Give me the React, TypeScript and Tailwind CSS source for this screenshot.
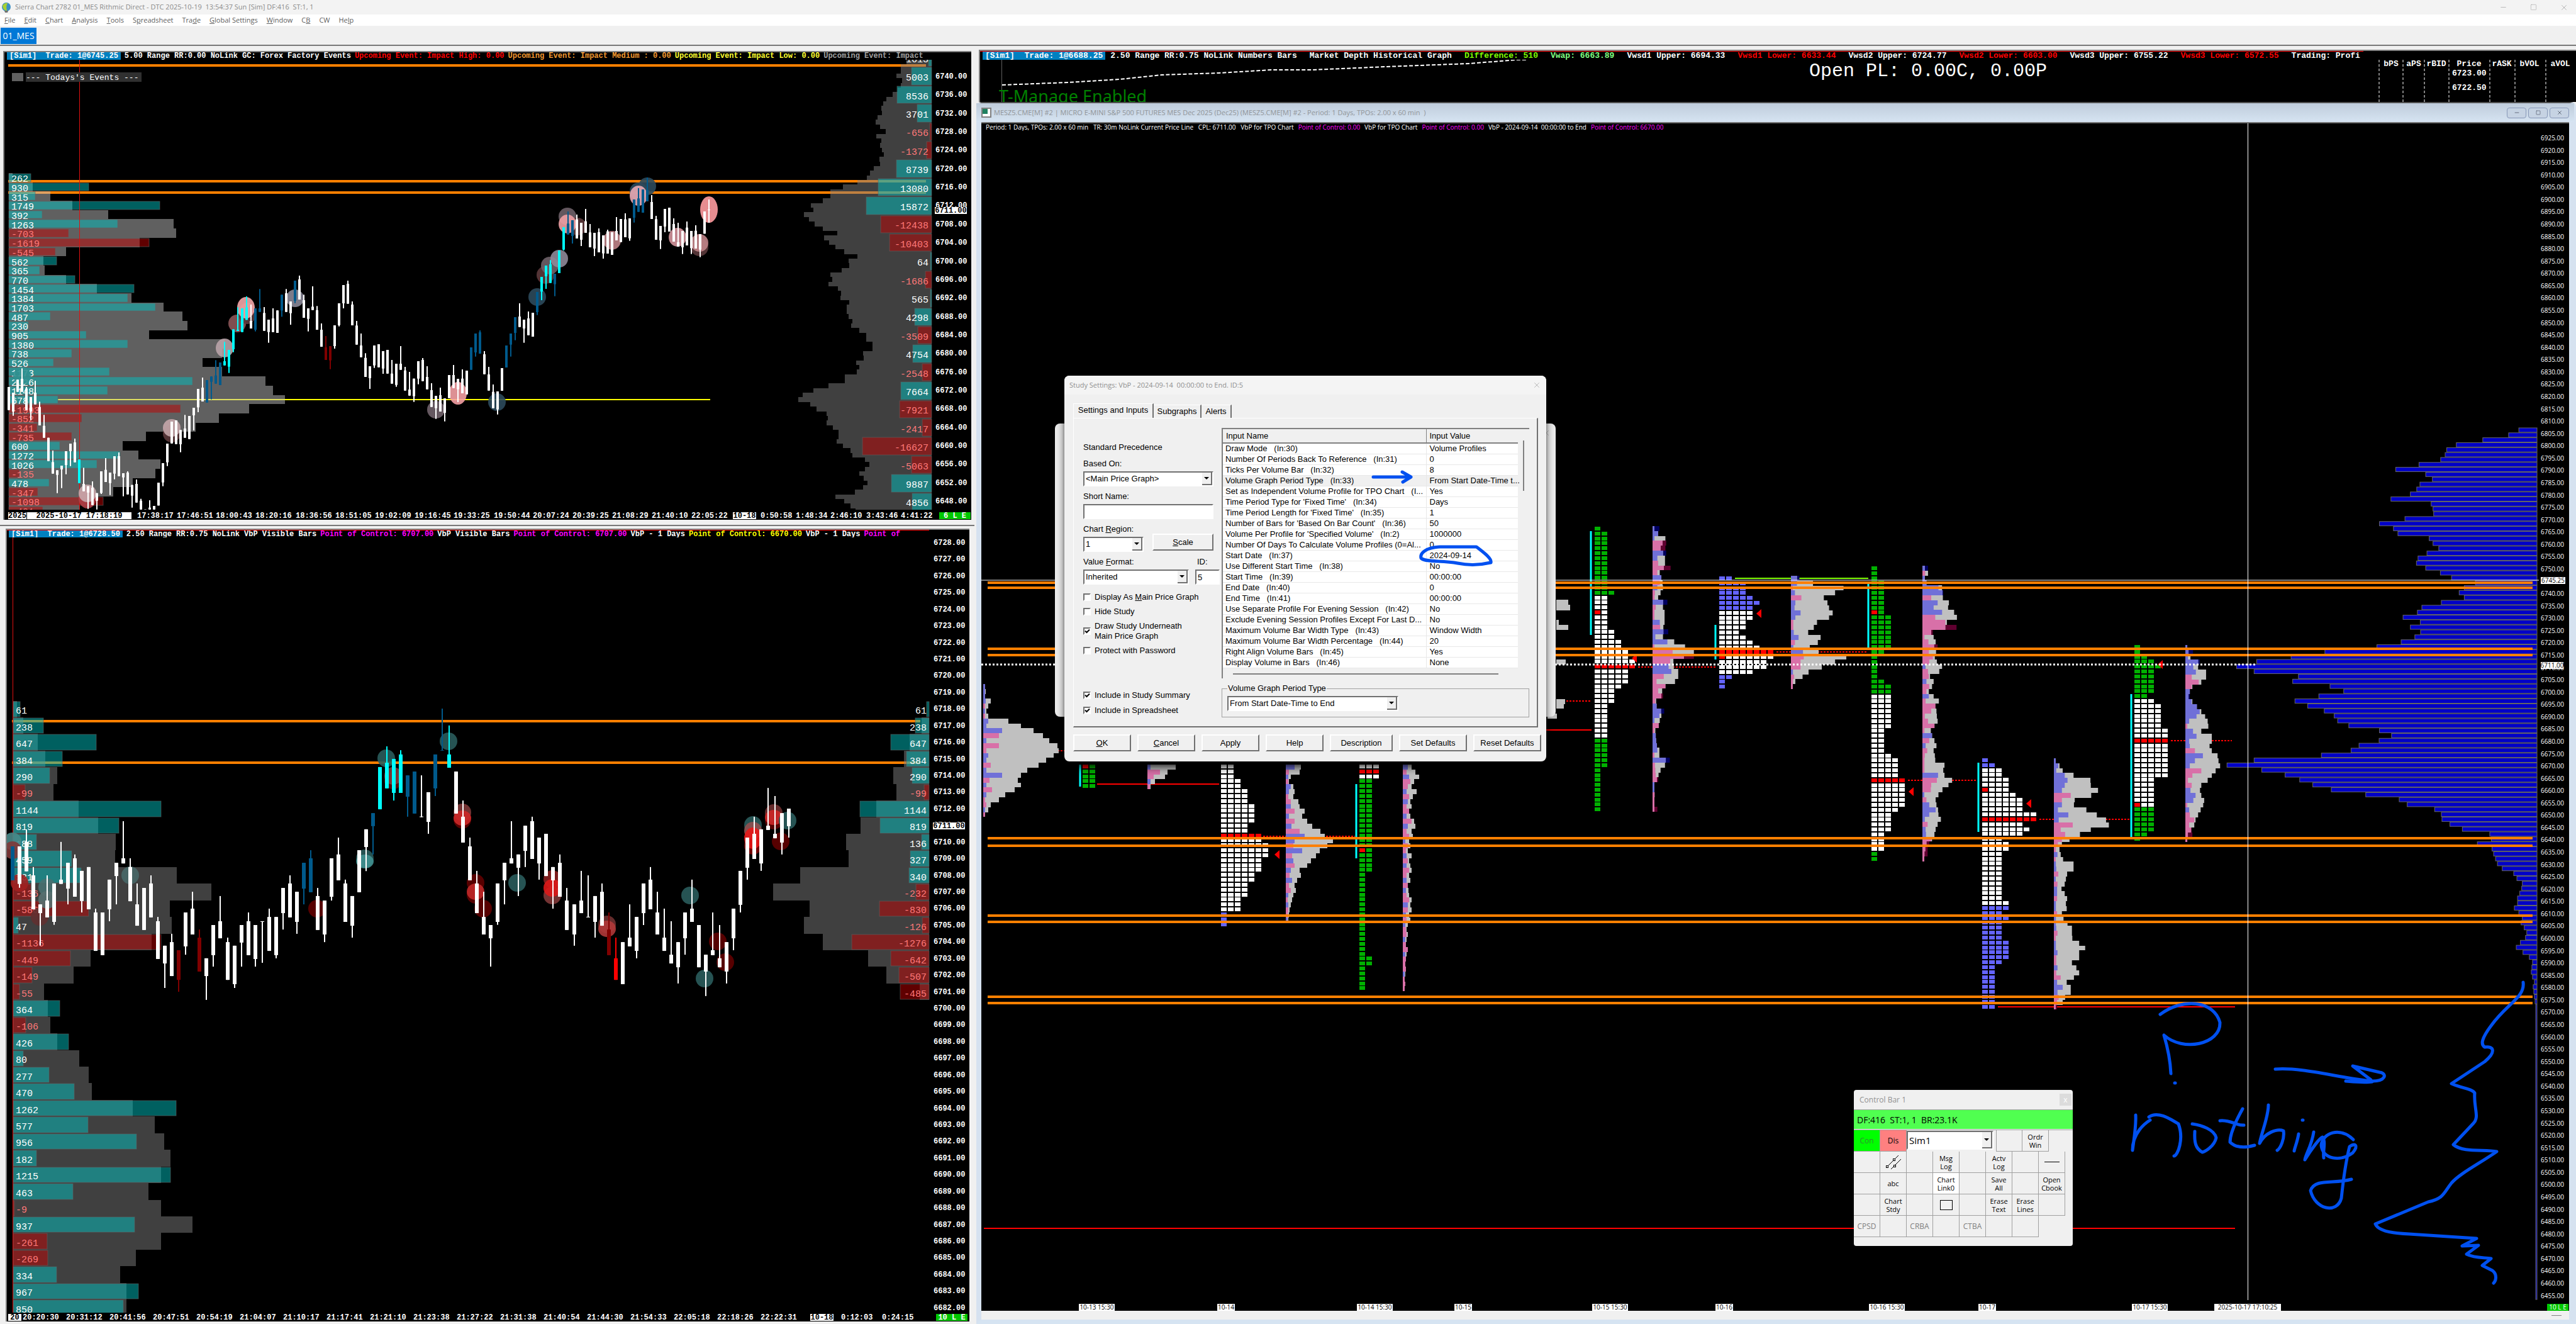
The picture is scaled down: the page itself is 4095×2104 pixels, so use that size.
import { ReactNode } from "react";
import { Minus, Square, X } from "lucide-react";

type Row = [number, number, number];
type Blob = [number, number, string, number?];

const ORANGE = "#ff8000";
const candleColors: Record<string, string> = {
  w: "#ffffff",
  b: "#005a8c",
  c: "#00ffff",
  d: "#800000",
  r: "#ff0000",
};

// candles: wick top, body top, body bottom, wick bottom (one entry per bar)
const rangeCandles =
  "645 645 755 755|672 672 762 782|610 610 668 668|556 606 668 668|645 652 755 755|693 693 762 803|615 672 728 728|715 740 828 828|778 830 887 887|887 887 998 998|948 1003 1058 1058|1042 1042 1064 1151|1020 1020 1038 1127|951 951 1017 1061|915 915 951 1022|891 909 1004 1004|990 990 1103 1103|1030 1107 1142 1142|1118 1118 1148 1226|1095 1125 1208 1208|1151 1151 1187 1229|1047 1047 1150 1155|984 1040 1098 1098|1053 1053 1103 1160|975 975 1058 1085|957 975 1070 1070|1056 1056 1076 1166|1047 1053 1157 1157|1112 1112 1163 1220|1086 1107 1196 1196|1178 1187 1229 1229|1228 1228 1229 1229|1185 1220 1229 1229|1212 1212 1229 1229|1101 1101 1210 1210|1008 1008 1100 1118|915 915 1004 1022|810 810 914 914|804 804 917 917|850 850 918 956|778 843 887 887|783 783 893 893|744 744 780 852|654 654 742 765|600 648 714 714|612 612 719 719|595 595 620 704|517 590 629 629|528 528 636 636|430 522 542 542|468 468 548 578|370 370 465 479|265 372 378 378|270 270 383 383|213 265 325 325|252 330 366 366|270 270 372 380|178 270 287 287|264 292 377 377|324 324 383 434|270 318 383 383|280 280 387 387|205 205 280 310|178 198 287 287|237 237 293 348|138 138 234 245|114 132 228 228|205 231 315 315|270 270 320 380|165 262 278 278|259 279 372 372|342 372 453 453|402 456 516 516|450 450 518 560|351 351 450 462|246 246 350 356|159 159 246 270|138 153 248 248|237 252 351 351|330 352 443 443|390 447 503 503|484 506 597 597|546 546 603 654|447 447 542 554|441 441 551 551|474 474 557 582|468 468 581 581|516 581 629 629|534 534 635 644|450 534 563 563|549 566 662 662|573 657 686 686|605 605 689 716|522 522 605 632|507 516 617 617|546 597 656 656|627 660 740 740|687 687 746 797|648 684 762 762|699 699 768 809|588 588 698 698|540 588 650 650|606 606 656 717|561 605 675 675|567 567 680 680|456 456 563 563|390 390 480 500|375 384 486 486|474 489 584 584|549 585 662 662|633 668 746 746|666 666 752 776|555 555 663 663|447 447 552 552|390 390 443 500|312 312 387 422|246 309 359 359|324 324 366 434|285 318 398 398|291 291 405 405|192 192 288 302|120 120 190 231|66 66 117 177|40 60 149 149|105 105 155 212|-6 -6 102 102|-117 -117 -10 -6|-192 -134 -82 -82|-150 -150 -75 -39|-177 -154 -63 -63|-138 -138 -57 -27|-204 -145 -90 -90|-132 -92 -21 -21|-90 -90 -15 21|-111 -93 3 3|-78 -78 8 33|-105 -97 9 9|-93 -93 15 15|-165 -99 -54 -54|-156 -156 -46 -46|-183 -154 -69 -69|-159 -159 -64 -52|-249 -249 -162 -139|-303 -254 -190 -190|-297 -297 -186 -186|-354 -295 -240 -240|-270 -237 -156 -156|-171 -155 -57 -57|-123 -123 -54 -13|-204 -204 -120 -93|-210 -210 -96 -96|-159 -132 -48 -48|-138 -45 -24 -24|-99 -99 -21 11|-144 -115 -30 -30|-99 -99 -17 11|-126 -100 -15 -15|-84 -84 -10 26|-192 -192 -86 -86|-249 -201 -198 -138";
const rangeTints: Record<string, number[]> = {
  c: [16, 49, 50, 51, 52, 53, 54, 121, 122, 123, 125, 126],
  b: [45, 46, 47, 48, 56, 57, 62, 65, 105, 106, 107, 113, 114, 115, 120, 124, 127, 128, 142, 143, 144, 145],
  d: [72, 73],
};

const fastCandles =
  "742 742 893 893|742 742 909 926|667 722 853 853|834 871 1022 1022|1000 1000 1039 1183|871 983 1058 1058|907 907 1078 1091|722 890 909 909|815 815 930 1000|778 795 966 966|851 851 985 1036|834 834 1022 1022|1019 1036 1207 1207|1036 1036 1226 1226|890 890 1022 1075|815 815 874 1000|630 795 818 818|795 834 986 986|907 1000 1095 1095|927 927 1114 1114|871 907 1058 1058|1056 1075 1243 1243|1184 1184 1263 1372|1131 1168 1319 1319|1204 1204 1336 1389|1036 1036 1187 1224|944 1019 1134 1134|1112 1148 1299 1299|1240 1240 1319 1425|1092 1092 1226 1277|963 1075 1151 1151|1148 1168 1336 1336|1184 1184 1355 1372|1092 1092 1170 1277|1036 1075 1226 1226|1092 1092 1243 1277|1075 1075 1078 1260|1019 1056 1207 1207|1056 1056 1226 1240|927 927 1039 1112|871 907 1058 1058|944 944 1078 1131|815 815 930 1000|759 795 946 946|927 963 1114 1114|983 983 1134 1168|795 795 966 983|703 778 893 893|890 907 1078 1078|963 963 1095 1148|759 759 946 946|666 666 745 852|594 594 652 778|389 389 577 577|297 370 484 484|353 353 504 538|314 333 504 504|426 426 521 610|409 409 596 596|426 609 612 612|501 501 633 686|333 333 484 518|129 314 316 316|204 333 392 392|409 409 596 596|538 610 725 725|703 742 893 893|851 907 1039 1039|944 1056 1134 1134|1092 1092 1151 1277|907 907 1078 1091|815 815 893 1000|630 795 818 818|778 778 837 963|650 650 762 834|610 630 798 798|703 703 818 890|686 686 874 874|834 834 893 1019|778 815 966 966|927 983 1114 1114|1000 1000 1134 1184|851 983 1039 1039|871 1055 1058 1058|963 963 1078 1148|907 944 1095 1095|1036 1112 1226 1226|1148 1240 1336 1336|1168 1168 1355 1355|1000 1148 1187 1187|1056 1056 1207 1240|907 907 1039 1092|834 890 1022 1022|944 1036 1134 1134|1019 1148 1207 1207|1075 1224 1263 1263|1168 1168 1280 1352|1036 1036 1151 1224|890 1019 1078 1078|1092 1092 1280 1280|1224 1224 1299 1408|1036 1204 1226 1226|1092 1240 1280 1280|1168 1168 1299 1352|1019 1019 1151 1204|851 851 1002 1036|703 703 837 890|610 686 798 798|666 666 818 851|482 650 669 669|518 686 706 706|594 594 725 778|574 574 652 703";
const fastTints: Record<string, number[]> = {
  c: [53, 54, 55, 56, 63],
  b: [0, 42, 43, 52, 57, 58, 61, 62],
  d: [24, 27, 86],
  r: [87],
};

// delta, bar width, total volume width
const rangeLeftProfile: Row[] = [
  [262, 35, 6], [930, 127, 38], [315, 42, 66], [1749, 240, 101], [392, 53, 158], [1263, 173, 262],
  [-703, 95, 266], [-1619, 223, 208], [-545, 74, 91], [562, 76, 55], [365, 49, 57], [770, 105, 91],
  [1454, 199, 140], [1384, 189, 195], [1703, 233, 246], [487, 66, 276], [230, 31, 284], [905, 123, 223],
  [1380, 189, 343], [738, 100, 339], [526, 71, 308], [1173, 160, 339], [2226, 292, 408], [1148, 157, 420],
  [678, 78, 439], [-1993, 273, 382], [-852, 116, 334], [-341, 45, 297], [-735, 100, 218], [600, 81, 181],
  [1272, 177, 206], [1026, 140, 241], [-135, 17, 233], [478, 64, 197], [-347, 46, 166], [-1098, 150, 113],
  [-401, 54, 112],
];
const rangeRightDeltas: [number, number][] = [
  [1613, 5], [5003, 32], [8536, 55], [3701, 23], [-656, 3], [-1372, 8], [8739, 56], [13080, 85], [15872, 104],
  [-12438, 81], [-10403, 67], [64, 2], [-1686, 10], [565, 2], [4298, 27], [-3509, 22], [4754, 30], [-2548, 15],
  [7664, 49], [-7921, 51], [-2417, 15], [-16627, 110], [-5063, 32], [9887, 64], [4856, 31],
];
const rangeRightVolume = [
  40, 49, 49, 56, 47, 49, 54, 62, 72, 77, 80, 79, 86, 89, 82, 73, 88, 80, 82, 79, 76, 83, 82, 92, 98, 103, 118, 141,
  161, 161, 173, 192, 188, 203, 195, 186, 173, 150, 171, 163, 153, 139, 118, 132, 131, 143, 161, 158, 164, 149, 144,
  145, 131, 135, 135, 132, 126, 128, 115, 104, 104, 94, 94, 109, 108, 120, 115, 119, 138, 138, 164, 188, 205, 212,
  193, 183, 167, 165, 167, 157, 148, 148, 151, 141, 129, 126, 106, 99, 106, 115, 108, 102, 109, 122, 153, 139, 129,
  121,
];
const fastLeftProfile: Row[] = [
  [61, 11, 6], [238, 48, 16], [647, 132, 39], [384, 78, 51], [290, 58, 70], [-99, 19, 64], [1144, 235, 104],
  [819, 168, 135], [188, 37, 163], [459, 93, 162], [531, 108, 260], [-136, 28, 315], [-586, 120, 249],
  [47, 8, 252], [-1136, 235, 220], [-449, 91, 123], [-149, 30, 96], [-55, 10, 49], [364, 74, 55], [-106, 20, 59],
  [426, 88, 70], [80, 16, 105], [277, 57, 120], [470, 97, 125], [1262, 259, 190], [577, 119, 225], [956, 196, 240],
  [182, 37, 250], [1215, 250, 235], [463, 95, 215], [-9, 2, 235], [937, 193, 285], [-261, 54, 235], [-269, 55, 195],
  [334, 69, 170], [967, 199, 180], [850, 175, 180],
];
const fastRightProfile: Row[] = [
  [61, 4, 0], [238, 22, 12], [647, 61, 31], [384, 36, 40], [290, 27, 57], [-99, 8, 52], [1144, 110, 84],
  [819, 78, 109], [136, 12, 132], [327, 30, 128], [340, 32, 205], [-232, 21, 248], [-830, 79, 190],
  [-126, 11, 199], [-1276, 123, 169], [-642, 61, 97], [-507, 48, 68], [-485, 46, 15],
];

const rangeBlobs: Blob[] = [
  [35, 597, "#309090"], [139, 792, "#b04048", 16], [139, 784, "#c8a8ac"], [273, 689, "#5c3a3c"],
  [273, 680, "#c4a6aa"], [357, 553, "#b9a3a8", 15], [377, 514, "#8c5558"], [393, 498, "#5c3a3c", 17],
  [391, 489, "#f4a6a8", 17], [469, 474, "#8a8898"], [693, 651, "#70626a"], [728, 625, "#f5a0a4", 18],
  [790, 639, "#2c4a5c"], [854, 472, "#2c4a5c"], [867, 437, "#5c3a3c"], [874, 422, "#6e6068"],
  [889, 411, "#8e8898"], [902, 344, "#6e6068"], [918, 360, "#5c3a3c"], [902, 356, "#f0a0a4", 15],
  [973, 382, "#c08488", 15], [1015, 304, "#2c4a5c"], [1029, 296, "#2c4a5c"], [1015, 311, "#e8a8b4", 16],
  [1077, 377, "#d4959c", 15], [1112, 393, "#5c3a3c"], [1112, 386, "#c08488"], [1127, 333, "#ff9ca0", 21],
];
const fastBlobs: Blob[] = [
  [20, 1337, "#488888"], [20, 1351, "#803838"], [31, 1403, "#a02020"], [75, 1410, "#487070"],
  [75, 1430, "#587070"], [63, 1457, "#603030"], [207, 1391, "#486868"], [504, 1444, "#600000"],
  [580, 1364, "#2a5c5c"], [580, 1369, "#409090", 11], [614, 1205, "#2a5c5c"], [625, 1240, "#600000"],
  [625, 1233, "#803838"], [713, 1178, "#2a5c5c"], [735, 1302, "#600000", 15], [735, 1291, "#803838"],
  [735, 1300, "#cc2828", 12], [756, 1403, "#600000"], [756, 1422, "#600000"], [756, 1417, "#c02828", 13],
  [768, 1444, "#600000"], [822, 1403, "#2a5c5c"], [878, 1397, "#8a2020"], [878, 1423, "#803838"],
  [878, 1411, "#dd1818", 14], [965, 1469, "#703030"], [965, 1476, "#b03838", 13], [1097, 1423, "#2a5c5c"],
  [1120, 1555, "#2a5c5c"], [1141, 1496, "#600000"], [1153, 1529, "#600000"], [1197, 1311, "#2a5c5c"],
  [1197, 1344, "#800000"], [1197, 1320, "#905050"], [1197, 1332, "#e81818", 17], [1230, 1304, "#600000"],
  [1230, 1292, "#703030"], [1230, 1299, "#cc2828", 12], [1241, 1337, "#600000"], [1252, 1304, "#2a5c5c"],
];

const rangeTimes: [number, string][] = [
  [218, "17:38:17"], [281, "17:46:51"], [343, "18:00:43"], [406, "18:20:16"], [470, "18:36:56"],
  [533, "18:51:05"], [596, "19:02:09"], [659, "19:16:45"], [721, "19:33:25"], [785, "19:50:44"],
  [847, "20:07:24"], [910, "20:39:25"], [973, "21:08:29"], [1036, "21:40:10"], [1099, "22:05:22"],
  [1209, "0:50:58"], [1265, "1:48:34"], [1320, "2:46:10"], [1377, "3:43:46"], [1432, "4:41:22"],
];
const fastTimes = [
  "20:20:30", "20:31:12", "20:41:56", "20:47:51", "20:54:19", "21:04:07", "21:10:17", "21:17:41", "21:21:10",
  "21:23:38", "21:27:22", "21:31:38", "21:40:54", "21:44:30", "21:54:33", "22:05:18", "22:18:26", "22:22:31",
];

const tint = (tints: Record<string, number[]>, i: number) =>
  candleColors[Object.keys(tints).find(key => tints[key].includes(i)) ?? "w"];

function Candles({
  data,
  tints,
  x0,
  step,
  y0,
  scale,
  width,
}: {
  data: string;
  tints: Record<string, number[]>;
  x0: number;
  step: number;
  y0: number;
  scale: number;
  width: number;
}) {
  return (
    <g>
      {data.split("|").map((bar, i) => {
        const [high, top, bottom, low] = bar.split(" ").map(v => y0 + Number(v) * scale);
        const x = Math.round(x0 + i * step);
        return (
          <g key={i} fill={tint(tints, i)}>
            <rect x={x - 1} y={high} width={2} height={low - high} />
            <rect x={x - width / 2} y={top} width={width} height={bottom - top} />
          </g>
        );
      })}
    </g>
  );
}

function Blobs({ items }: { items: Blob[] }) {
  return (
    <g fillOpacity={0.9}>
      {items.map(([x, y, color, ry = 14], i) => (
        <ellipse key={i} cx={x} cy={y} rx={14} ry={ry} fill={color} />
      ))}
    </g>
  );
}

// volume by price with the delta printed on every row
function DeltaProfile({
  rows,
  edge,
  top,
  pitch,
  flip,
  grey,
}: {
  rows: Row[];
  edge: number;
  top: number;
  pitch: number;
  flip?: boolean;
  grey: string;
}) {
  return (
    <g>
      {rows.map(([delta, bar, total], i) => {
        const y = Math.round(top + i * pitch);
        const height = Math.round(top + (i + 1) * pitch) - y;
        return (
          <g key={i}>
            <rect x={flip ? edge - total : edge} y={y} width={total} height={height} fill={grey} />
            <rect
              x={flip ? edge - bar : edge}
              y={y + 1}
              width={bar}
              height={height - 2}
              fill={delta < 0 ? "#c00000" : "#00c0c0"}
              fillOpacity={0.5}
              stroke="#606060"
              strokeOpacity={0.6}
            />
          </g>
        );
      })}
    </g>
  );
}

function DeltaLabels({
  values,
  x,
  top,
  pitch,
  end,
}: {
  values: number[];
  x: number;
  top: number;
  pitch: number;
  end?: boolean;
}) {
  return (
    <g className="text-[15px]" textAnchor={end ? "end" : "start"}>
      {values.map((value, i) => (
        <text key={i} x={x} y={top + (i + 0.5) * pitch + 6} fill={value < 0 ? "#ff7878" : "#ffffff"}>
          {value}
        </text>
      ))}
    </g>
  );
}

function Tag({ x, y, width, children, color = "#000", bg = "#fff" }: {
  x: number;
  y: number;
  width: number;
  children: string;
  color?: string;
  bg?: string;
}) {
  return (
    <g>
      <rect x={x} y={y - 5} width={width} height={11} fill={bg} />
      <text x={x + width / 2} y={y + 4} textAnchor="middle" fill={color}>
        {children}
      </text>
    </g>
  );
}

function PriceAxis({ x, first, step, count, y0, pitch }: {
  x: number;
  first: number;
  step: number;
  count: number;
  y0: number;
  pitch: number;
}) {
  return (
    <g fill="#fff">
      {Array.from({ length: count }, (_, i) => (
        <text key={i} x={x} y={y0 + i * pitch + 4}>
          {(first - i * step).toFixed(2)}
        </text>
      ))}
    </g>
  );
}

function TradeTag({ children }: { children: string }) {
  return <span className="bg-[#0080c0] px-1 text-white">{children}</span>;
}

function RangeChart() {
  return (
    <section className="ml-[5px] mr-[5px] border-l-2 border-t-2 border-[#808080] bg-black">
      <div className="mr-16 flex h-3 gap-x-[6px] overflow-hidden whitespace-pre pl-1 font-['Liberation_Mono',monospace] text-[12px] font-bold leading-3 text-white">
        <TradeTag>{"[Sim1]  Trade: 1@6745.25"}</TradeTag>
        <span>5.00 Range RR:0.00 NoLink GC: Forex Factory Events</span>
        <span className="text-[#ff0000]">Upcoming Event: Impact High: 0.00</span>
        <span className="text-[#f09830]">Upcoming Event: Impact Medium : 0.00</span>
        <span className="text-[#ffff30]">Upcoming Event: Impact Low: 0.00</span>
        <span className="text-[#a0a0a0]">Upcoming Event: Impact</span>
      </div>
      <svg viewBox="7 95 1537 731" className="block w-full font-['Liberation_Mono',monospace]">
        <g fill={ORANGE}>
          <rect x={13} y={102} width={1459} height={4} />
          <rect x={13} y={286} width={1459} height={4} />
          <rect x={13} y={304} width={1459} height={4} />
        </g>
        <rect x={92} y={634} width={1037} height={2} fill="#ffff00" />
        <DeltaProfile rows={rangeLeftProfile} edge={14} top={275} pitch={14.69} grey="rgba(192,192,192,0.5)" />
        {rangeRightVolume.map((w, i) => (
          <rect
            key={i}
            x={1481 - w}
            y={Math.round(94.9 + i * 7.35)}
            width={w}
            height={Math.round(94.9 + (i + 1) * 7.35) - Math.round(94.9 + i * 7.35)}
            fill="#808080"
            fillOpacity={0.5}
          />
        ))}
        <DeltaProfile
          rows={rangeRightDeltas.map(([delta, bar]) => [delta, bar, 0] as Row)}
          edge={1481}
          top={77}
          pitch={29.4}
          grey="none"
          flip
        />
        <rect x={126} y={95} width={1} height={716} fill="#e01010" />
        <DeltaLabels values={rangeLeftProfile.map(r => r[0])} x={18} top={276} pitch={14.69} />
        <DeltaLabels values={rangeRightDeltas.map(r => r[0])} x={1476} top={78} pitch={29.4} end />
        <Blobs items={rangeBlobs} />
        <Candles data={rangeCandles} tints={rangeTints} x0={13.8} step={7} y0={400} scale={1 / 3} width={4} />
        <rect x={19} y={116} width={18} height={13} fill="#606060" />
        <rect x={41} y={115} width={184} height={15} fill="#303030" />
        <text x={41} y={127} fill="#fff" className="text-[13px]">
          --- Todays's Events ---
        </text>
        <rect x={7} y={810} width={1537} height={16} />
        <g className="text-[12px] font-bold">
          <PriceAxis x={1487} first={6740} step={4} count={24} y0={121} pitch={29.35} />
          <Tag x={1486} y={334} width={51}>6711.00</Tag>
          <Tag x={13} y={819} width={29}>2025</Tag>
          <Tag x={43} y={819} width={166}>2025-10-17  17:18:19</Tag>
          {rangeTimes.map(([x, label]) => (
            <text key={x} x={x} y={823} fill="#fff">
              {label}
            </text>
          ))}
          <Tag x={1165} y={819} width={37}>10-18</Tag>
          <Tag x={1493} y={819} width={50} bg="#00c800" color="#fff">
            6 L E
          </Tag>
        </g>
      </svg>
    </section>
  );
}

function FastChart() {
  return (
    <section className="ml-[9px] mr-[8px] border-l-2 border-t-2 border-[#808080] bg-black">
      <div className="mr-16 flex h-3 gap-x-[6px] overflow-hidden whitespace-pre border-t border-[#ff0000] pl-[3px] font-['Liberation_Mono',monospace] text-[12px] font-bold leading-3 text-white">
        <TradeTag>{"[Sim1]  Trade: 1@6728.50"}</TradeTag>
        <span>2.50 Range RR:0.75 NoLink VbP Visible Bars</span>
        <span className="text-[#ff00ff]">Point of Control: 6707.00</span>
        <span>VbP Visible Bars</span>
        <span className="text-[#ff00ff]">Point of Control: 6707.00</span>
        <span>VbP - 1 Days</span>
        <span className="text-[#ffff00]">Point of Control: 6670.00</span>
        <span>VbP - 1 Days</span>
        <span className="text-[#ff00ff]">Point of</span>
      </div>
      <svg viewBox="11 854 1530 1246" className="block w-full font-['Liberation_Mono',monospace]">
        <rect x={19} y={1144} width={1444} height={4} fill={ORANGE} />
        <rect x={19} y={1210} width={1444} height={4} fill={ORANGE} />
        <DeltaProfile rows={fastLeftProfile} edge={21} top={1113.6} pitch={26.43} grey="rgba(128,128,128,0.5)" />
        <DeltaProfile rows={fastRightProfile} edge={1477} top={1113.6} pitch={26.43} grey="rgba(128,128,128,0.5)" flip />
        <rect x={20} y={854} width={1} height={1232} fill="#e01010" />
        <DeltaLabels values={fastLeftProfile.map(r => r[0])} x={25} top={1115} pitch={26.43} />
        <DeltaLabels values={fastRightProfile.map(r => r[0])} x={1473} top={1115} pitch={26.43} end />
        <Blobs items={fastBlobs} />
        <Candles data={fastCandles} tints={fastTints} x0={19.9} step={11.02} y0={1080} scale={1 / 2.8} width={6} />
        <rect x={11} y={2086} width={1530} height={14} />
        <g className="text-[12px] font-bold">
          <PriceAxis x={1484} first={6728} step={1} count={47} y0={862} pitch={26.43} />
          <Tag x={1483} y={1312} width={51}>6711.00</Tag>
          {fastTimes.map((label, i) => (
            <text key={label} x={36 + i * 69} y={2097} fill="#fff">
              {label}
            </text>
          ))}
          <Tag x={13} y={2093} width={21}>20</Tag>
          <Tag x={1288} y={2093} width={37}>10-18</Tag>
          <text x={1337} y={2097} fill="#fff">0:12:03</text>
          <text x={1402} y={2097} fill="#fff">0:24:15</text>
          <Tag x={1488} y={2093} width={50} bg="#00c800" color="#fff">
            10 L E
          </Tag>
        </g>
      </svg>
    </section>
  );
}

function LadderStrip() {
  const columns: [number, number, string][] = [
    [3782, 3801, "bPS"],
    [3820, 3837, "aPS"],
    [3854, 3873, "rBID"],
    [3893, 3925, "Price"],
    [3958, 3977, "rASK"],
    [3998, 4021, "bVOL"],
    [4047, 4070, "aVOL"],
  ];
  return (
    <section className="ml-[7px] border-l-2 border-t-2 border-[#808080] bg-black">
      <div className="mr-[338px] flex h-[14px] gap-x-2 overflow-hidden whitespace-pre border-t border-[#ff0000] pl-1 font-['Liberation_Mono',monospace] text-[13px] font-bold leading-[13px] text-white">
        <TradeTag>{"[Sim1]  Trade: 1@6688.25"}</TradeTag>
        <span>2.50 Range RR:0.75 NoLink Numbers Bars</span>
        <span className="pl-3">Market Depth Historical Graph</span>
        <span className="pl-3 text-[#80ff00]">Difference: 510</span>
        <span className="pl-3 text-[#80ff80]">Vwap: 6663.89</span>
        <span className="pl-3">Vwsd1 Upper: 6694.33</span>
        <span className="pl-3 text-[#ff0000]">Vwsd1 Lower: 6633.44</span>
        <span className="pl-3">Vwsd2 Upper: 6724.77</span>
        <span className="pl-3 text-[#ff0000]">Vwsd2 Lower: 6603.00</span>
        <span className="pl-3">Vwsd3 Upper: 6755.22</span>
        <span className="pl-3 text-[#ff0000]">Vwsd3 Lower: 6572.55</span>
        <span className="pl-3">Trading: Profi</span>
      </div>
      <svg viewBox="1558 95 2537 67" className="block w-full font-['Liberation_Mono',monospace]">
        <polyline
          points="1593,135 1698,131 1780,126 1847,119 1938,116 2021,111 2087,111 2203,106 2336,101 2411,95 2428,95"
          fill="none"
          stroke="#fff"
          strokeWidth={2}
          strokeDasharray="6 3"
        />
        <rect x={1592} y={95} width={1} height={67} fill="#606060" />
        <text x={1588} y={163} fill="#008000" className="font-['Noto_Sans',sans-serif] text-[27px]">
          T-Manage Enabled
        </text>
        <text x={2876} y={121} fill="#fff" className="text-[30px]">
          Open PL: 0.00C, 0.00P
        </text>
        {columns.map(([x, mid, label]) => (
          <g key={label} fill="#fff" className="text-[13px] font-bold">
            <line x1={x} x2={x} y1={95} y2={162} stroke="#fff" strokeDasharray="4 3" />
            <text x={mid} y={105} textAnchor="middle">
              {label}
            </text>
          </g>
        ))}
        <g className="text-[13px] font-bold" fill="#fff">
          <text x={3898} y={120}>6723.00</text>
          <text x={3898} y={143}>6722.50</text>
        </g>
      </svg>
    </section>
  );
}

const tpoColors: Record<string, [string, string]> = {
  g: ["#00b000", "#00b000"],
  w: ["#ffffff", "#ffffff"],
  p: ["#6464ff", "#6464ff"],
  R: ["#ff0000", "#ff0000"],
  m: ["#ff0000", "#ffffff"],
  n: ["#ff0000", "#00b000"],
};

// runs of letters: colour, letters per row, optional repeat
const tpoDays: [number, number, string][] = [
  [1721, 1215, "n2 g2*4"],
  [1941, 1215, "w2*3 w3*2 w4*3 w5*4 w4*2 R6 w6 w7*3 w6*3 w5*2 w4*3 w3*3 p1*3"],
  [2161, 1215, "w3 R3 w3 g2*14 n2 g2*4 g1*17 g2*2 g1*5"],
  [2535, 837, "g1 g2*12 g3 w2*3 m2 w2*3 w3*2 w4*2 w5*2 w6 R6 w5*3 w4 w3*3 w2*7 g2*6 g1*9"],
  [2733, 916, "p2 p4*3 p5 p6 p5 w5*2 w4*2 w3 w4 w5 w6 R8 m8 w7*2 w5 p2 p1*2"],
  [2975, 900, "g1*3 g2*6 n2 g3*7 g2 g1*5 g2 g3*2 w3*7 w2*5 w3 w4*4 R5 w5*5 w4 w3*4 w2*4 g1*2"],
  [3151, 1205, "p1 p2 w3*2 w4*2 m4 w5 w6*3 w8 R8 w6 w7 w6 w3 w4*2 w3*10 w4 p4 p3 p4 p3*4 p4*4 p3 p2*9"],
  [3393, 1025, "g1*2 g2 g3 g4 g3*5 g2 w3 w4*5 w5*2 R5 w5*7 w3*5 m3 g3*5 g2 g1"],
];

// pairs of volume and delta (negative is selling)
const dayProfiles: [number, number, number, string][] = [
  [1563, 1087, 1, "2,1 4,1 0,0 12,4 8,-3 5,3 8,-3 40,8 60,5 80,30 95,-25 105,5 118,-25 120,-5 112,8 100,5 88,-12 70,5 60,30 55,-10 60,5 50,-14 35,5 25,-3 12,-5 8,2 3,-2"],
  [1824, 1215, 1, "45,5 32,-20 28,-10 12,5 5,-4"],
  [2044, 1215, 1, "24,14 22,-5 8,4 5,-4 12,8 14,5 12,-4 20,-8 22,8 30,-14 26,5 34,-14 42,9 55,-22 62,30 75,14 66,-12 54,26 48,-10 40,12 34,-14 22,8 24,-6 18,10 14,-5 16,-8 12,4 10,-3 8,4 6,-4 5,-2 4,2"],
  [2230, 1215, 1, "14,8 20,-6 26,10 18,-12 14,-8 22,6 16,-10 12,8 14,-6 10,-10 12,6 18,-14 20,8 14,-6 16,-10 10,4 12,-8 8,-5 14,6 10,-8 12,6 14,-10 10,-6 12,6 8,-8 9,5 10,-6 14,-10 12,8 14,-8 10,5 12,-6 8,4 6,-5 8,-6 6,4 5,-5 8,-8 6,4 5,-5 4,-4 5,-5 4,3 3,-3 4,-4 3,-3"],
  [2627, 836, 0.638, "4,17 14,14 32,4 25,-34 20,-32 26,34 31,12 31,-14 28,-45 18,-12 22,22 25,-18 26,12 20,-6 14,-5 26,37 26,-8 30,-4 30,-4 30,18 27,-19 27,39 26,7 54,37 81,-4 103,-50 78,-103 52,-44 53,40 64,47 64,-28 56,-10 32,-32 24,-14 22,-26 9,-7 10,10 21,29 22,17 18,4 15,-16 7,-4 8,8 9,9 11,11 17,12 17,-2 33,43 31,-6 20,-7 15,-8 11,-14 4,4 4,4 5,-5 4,-4 3,-3 4,-12"],
  [2847, 915, 0.638, "15,21 55,15 131,-4 110,10 82,-26 91,11 95,9 104,24 95,11 65,-6 57,-6 43,7 74,19 67,-10 47,6 69,30 138,-32 110,-24 77,-24 44,5 29,-8 11,-5 4,-4"],
  [3056, 899, 0.638, "6,14 14,-7 6,6 10,10 49,40 50,52 51,-22 66,38 64,28 79,49 86,-32 61,-57 57,-85 22,-26 28,-5 33,-15 29,-38 34,-16 31,-26 36,-17 49,8 42,-14 19,-16 28,10 24,-17 16,-10 28,16 41,-8 32,-33 35,-22 36,-6 38,-14 30,-30 21,-5 24,24 30,-17 35,8 28,-12 31,-6 32,-5 55,-5 52,-5 55,39 74,-36 65,-22 50,-21 40,4 33,-10 35,17 39,33 40,17 46,6 38,-13 33,8 30,9 24,-22 10,-17 7,-13 5,-13 3,-3"],
  [3265, 1205, 0.638, "4,4 14,11 22,6 49,27 91,34 92,27 110,20 93,-42 52,-20 50,20 81,10 107,36 130,12 137,-47 92,-17 65,-28 39,-20 20,-10 14,-5 17,9 23,-4 49,5 49,6 33,-11 30,4 27,-9 19,8 27,8 33,-8 30,5 32,5 20,-8 24,5 34,5 45,6 45,-9 46,-4 63,5 78,5 63,9 63,-6 45,-6 56,9 63,-6 50,-17 32,8 42,22 42,9 28,-12 22,-8 4,-8"],
  [3474, 1025, 0.507, "6,6 10,24 16,8 40,45 40,25 65,33 65,-20 50,-42 22,-20 14,14 10,14 22,20 36,36 50,45 62,35 70,12 72,-6 50,24 83,35 83,12 76,14 83,-30 101,55 104,30 109,14 95,-50 83,-22 70,-8 50,-20 46,16 50,32 59,25 56,-6 48,12 40,-14 32,-28 28,-12 18,-20 8,-22 6,-6"],
];

const longProfile = [
  57, 89, 170, 253, 283, 288, 302, 370, 443, 349, 328, 367, 377, 397, 458, 332, 326, 324, 414, 494, 450, 436, 338,
  326, 308, 345, 373, 378, 349, 303, 268, 193, 228, 244, 228, 300, 361, 375, 420, 366, 397, 365, 383, 426, 502, 665,
  771, 879, 942, 887, 748, 766, 649, 606, 684, 759, 719, 667, 636, 625, 590, 494, 456, 495, 558, 583, 676, 887, 972,
  863, 790, 744, 703, 645, 537, 432, 407, 321, 300, 298, 273, 234, 148, 143, 187, 141, 136, 130, 124, 109, 73, 63, 46,
  48, 54, 61, 61, 71, 57, 46, 50, 40, 32, 36, 52, 65, 44, 24, 14, 16, 18, 14, 8, 12, 10, 8, 6,
];

const PITCH = 7.83;

function TpoColumn({ x, y, spec }: { x: number; y: number; spec: string }) {
  const rows = spec.split(" ").flatMap(run => {
    const [head, repeat = "1"] = run.split("*");
    return Array<string>(Number(repeat)).fill(head);
  });
  return (
    <g>
      {rows.map((row, r) => {
        const [first, rest] = tpoColors[row[0]];
        return Array.from({ length: Number(row.slice(1)) }, (_, c) => (
          <rect
            key={`${r}-${c}`}
            x={x + c * 11}
            y={Math.round(y + r * PITCH)}
            width={9}
            height={6}
            fill={c === 0 ? first : rest}
          />
        ));
      })}
    </g>
  );
}

function DayProfile({ x, y, scale, spec }: { x: number; y: number; scale: number; spec: string }) {
  return (
    <g>
      {spec.split(" ").map((pair, i) => {
        const [volume, delta] = pair.split(",").map(Number);
        const top = Math.round(y + i * PITCH);
        const height = Math.round(y + (i + 1) * PITCH) - top;
        const bar = Math.abs(delta);
        return (
          <g key={i}>
            <rect x={x} y={top} width={bar * scale} height={height} fill={delta < 0 ? "#600030" : "#000060"} />
            <rect x={x} y={top} width={volume * scale} height={height} fill="#c0c0c0" />
            <rect
              x={x}
              y={top}
              width={Math.max(Math.min(bar, volume) * scale, 3)}
              height={height}
              fill={delta < 0 ? "#d870a8" : "#7070d8"}
            />
          </g>
        );
      })}
    </g>
  );
}

function TpoChart() {
  const dates: [number, string][] = [
    [1715, "10-13  15:30"],
    [1935, "10-14"],
    [2157, "10-14  15:30"],
    [2312, "10-15"],
    [2531, "10-15  15:30"],
    [2727, "10-16"],
    [2971, "10-16  15:30"],
    [3145, "10-17"],
    [3389, "10-17  15:30"],
  ];
  const triangles = [
    [2594, 1046],
    [2792, 975],
    [2026, 1358],
    [3034, 1258],
    [3221, 1277],
    [3430, 1056],
  ];
  return (
    <svg viewBox="1560 208 2524 1875" className="block w-full overflow-visible font-['Open_Sans',sans-serif] text-[10px]">
      {/* remainder of the hidden session behind the settings windows */}
      <g fill="#c0c0c0">
        <rect x={2474} y={953} width={19} height={8} />
        <rect x={2474} y={961} width={22} height={9} />
        <rect x={2474} y={985} width={4} height={8} />
        <rect x={2474} y={993} width={19} height={8} />
        <rect x={2474} y={1048} width={15} height={8} />
        <rect x={2474} y={1111} width={14} height={8} />
        <rect x={2474} y={1119} width={12} height={7} />
        <rect x={2460} y={1134} width={15} height={8} />
      </g>
      <g stroke="#ff0000" strokeWidth={2}>
        <line x1={2455} x2={2530} y1={1160} y2={1160} />
        <line x1={1744} x2={1938} y1={1246} y2={1246} />
        <line x1={3176} x2={3553} y1={1600} y2={1600} />
        <line x1={1564} x2={3553} y1={1952} y2={1952} />
        <g strokeDasharray="3 2">
          <line x1={1681} x2={1716} y1={1193} y2={1193} />
          <line x1={2490} x2={2530} y1={1114} y2={1114} />
          <line x1={2008} x2={2154} y1={1329} y2={1329} />
          <line x1={2604} x2={2727} y1={1060} y2={1060} />
          <line x1={2824} x2={2967} y1={1036} y2={1036} />
          <line x1={3033} x2={3143} y1={1240} y2={1240} />
          <line x1={3242} x2={3385} y1={1302} y2={1302} />
          <line x1={3451} x2={3548} y1={1177} y2={1177} />
        </g>
      </g>
      <line x1={2758} x2={2970} y1={919} y2={919} stroke="#80ff00" strokeWidth={2} />
      {longProfile.map((w, i) => {
        const y = 680 + i * PITCH;
        return (
          <rect key={i} x={4033 - w * 0.507} y={y} width={w * 0.507} height={PITCH - 1} fill="#0000c8" stroke="#686868" />
        );
      })}
      <rect x={4031} y={1596} width={2} height={469} fill="#0000c8" stroke="#686868" />
      {dayProfiles.map(([x, y, scale, spec]) => (
        <DayProfile key={x} x={x} y={y} scale={scale} spec={spec} />
      ))}
      <g stroke="#00ffff" strokeWidth={3}>
        <line x1={1717} x2={1717} y1={1215} y2={1250} />
        <line x1={2156} x2={2156} y1={1246} y2={1364} />
        <line x1={2529} x2={2529} y1={844} y2={1009} />
        <line x1={2727} x2={2727} y1={993} y2={1048} />
        <line x1={2970} x2={2970} y1={927} y2={1029} />
        <line x1={3145} x2={3145} y1={1212} y2={1322} />
        <line x1={3388} x2={3388} y1={1103} y2={1330} />
      </g>
      {tpoDays.map(([x, y, spec]) => (
        <TpoColumn key={x} x={x} y={y} spec={spec} />
      ))}
      {triangles.map(([x, y]) => (
        <path key={x} d={`M${x} ${y}l8 -7v14z`} fill="#ff0000" />
      ))}
      <line x1={1560} x2={4036} y1={922} y2={922} stroke="#fff" strokeWidth={1} />
      <g fill={ORANGE}>
        {[924, 932, 1029, 1039, 1330, 1342, 1453, 1463, 1582, 1592].map(y => (
          <rect key={y} x={1570} y={y} width={2456} height={4} />
        ))}
      </g>
      <line x1={1560} x2={3588} y1={1056} y2={1056} stroke="#fff" strokeWidth={3} strokeDasharray="3 3" />
      <rect x={3573} y={196} width={1} height={1870} fill="#fff" />

      <PriceAxis x={4039} first={6925} step={5} count={95} y0={219} pitch={19.57} />
      <Tag x={4039} y={922} width={39}>6745.25</Tag>
      <Tag x={4039} y={1057} width={36}>6711.00</Tag>
      {dates.map(([x, label]) => (
        <Tag key={x} x={x} y={2077} width={label.length > 5 ? 57 : 28}>
          {label}
        </Tag>
      ))}
      <Tag x={3520} y={2077} width={106}>2025-10-17  17:10:25</Tag>
      <Tag x={4049} y={2077} width={34} bg="#00c800" color="#fff">
        10 L E
      </Tag>

      {/* pen notes */}
      <g fill="none" stroke="#0050f0" strokeWidth={5} strokeLinecap="round" strokeLinejoin="round">
        <path d="M3434 1612C3470 1585 3520 1590 3529 1625C3530 1660 3470 1672 3440 1645C3446 1665 3450 1685 3451 1706" />
        <path d="M3457 1721h1" />
        <path d="M3617 1699C3660 1696 3710 1711 3769 1718C3792 1719 3796 1706 3783 1704L3740 1694L3769 1716M3729 1718C3745 1720 3765 1720 3771 1719" />
        <path d="M3395 1772C3396 1790 3392 1812 3390 1828C3390 1800 3410 1785 3418 1780M3416 1775C3430 1765 3450 1778 3463 1786C3472 1810 3462 1836 3456 1837" />
        <path d="M3485 1786C3500 1788 3520 1795 3523 1808C3520 1822 3505 1830 3501 1831C3490 1825 3488 1815 3489 1798" />
        <path d="M3565 1762C3555 1780 3545 1800 3545 1815C3555 1825 3570 1824 3584 1820M3529 1781C3545 1779 3555 1789 3567 1788" />
        <path d="M3606 1756C3606 1775 3595 1800 3592 1817C3600 1800 3620 1793 3630 1797C3632 1810 3625 1825 3620 1828" />
        <path d="M3654 1802C3652 1815 3648 1823 3647 1829M3660 1780h1" />
        <path d="M3678 1799C3675 1820 3665 1835 3664 1843C3675 1825 3688 1808 3692 1807C3698 1815 3692 1830 3694 1840" />
        <path d="M3741 1811C3720 1790 3692 1800 3690 1820C3692 1842 3720 1847 3740 1832C3750 1820 3744 1816 3735 1822C3728 1850 3724 1885 3722 1904C3715 1930 3680 1922 3673 1892C3680 1872 3710 1882 3738 1874" />
        <path d="M4011 1561C4014 1585 3985 1595 3960 1630C3945 1650 3943 1660 3950 1664C3965 1662 3968 1672 3950 1687L3897 1722C3915 1730 3930 1730 3934 1737C3932 1760 3942 1775 3932 1785L3900 1819C3915 1832 3950 1826 3969 1830C3940 1850 3910 1865 3897 1880C3885 1895 3885 1905 3860 1910L3776 1945C3780 1955 3800 1960 3830 1961L3937 1968L3914 1980L3940 1979L3921 1993C3935 2000 3950 1998 3960 2000L3946 2011L3962 2019C3970 2025 3968 2035 3964 2039" />
      </g>
    </svg>
  );
}

function MarketWindow() {
  return (
    <section className="ml-[3px] rounded-t-lg border-b-[7px] border-l-[8px] border-r-[11px] border-t-2 border-b-[#d6e4f2] border-l-[#d6e2f0] border-r-[#d6e2f0] border-t-[#505050] bg-black">
      <div className="-mx-2 flex h-[30px] items-center justify-between bg-gradient-to-b from-[#bfccdb] to-[#d6e4f2] pl-2 font-['Open_Sans',sans-serif] text-[11px] text-[#909498]">
        <div className="flex items-center gap-1">
          <span className="flex h-4 w-4 border-2 border-[#808080] bg-white">
            <span className="h-2 w-2 bg-[#208060]" />
          </span>
          <span className="whitespace-pre">
            {"MESZ5.CME[M] #2 | MICRO E-MINI S&P 500 FUTURES MES Dec 2025 (Dec25) (MESZ5.CME[M] #2 - Period: 1 Days, TPOs: 2.00 x 60 min  )"}
          </span>
        </div>
        <div className="flex gap-[3px] pr-2">
          {[<Minus size={10} />, <Square size={8} />, <X size={10} />].map((icon, i) => (
            <button
              key={i}
              aria-label={["Minimize", "Maximize", "Close"][i]}
              className="flex h-[17px] w-[31px] items-center justify-center rounded-sm border border-[#8898b8] bg-[#c6d3e3] text-[#505868]"
            >
              {icon}
            </button>
          ))}
        </div>
      </div>
      <div className="flex h-[14px] gap-x-[7px] overflow-hidden whitespace-pre border-t-2 border-[#707070] pl-[7px] font-['Open_Sans',sans-serif] text-[10px] leading-3 text-white">
        <span>{"Period: 1 Days, TPOs: 2.00 x 60 min   TR: 30m NoLink Current Price Line   CPL: 6711.00   VbP for TPO Chart"}</span>
        <span className="text-[#ff00ff]">Point of Control: 0.00</span>
        <span>VbP for TPO Chart</span>
        <span className="text-[#ff00ff]">Point of Control: 0.00</span>
        <span>{"VbP - 2024-09-14  00:00:00 to End"}</span>
        <span className="text-[#ff00ff]">Point of Control: 6670.00</span>
      </div>
      <TpoChart />
      <div className="flex h-[14px] items-center justify-end bg-[#f0f0f0] pr-3">
        <span className="h-px w-4 bg-[#808080]" />
      </div>
    </section>
  );
}

const inputs: [string, string][] = [
  ["Draw Mode   (In:30)", "Volume Profiles"],
  ["Number Of Periods Back To Reference   (In:31)", "0"],
  ["Ticks Per Volume Bar   (In:32)", "8"],
  ["Volume Graph Period Type   (In:33)", "From Start Date-Time t..."],
  ["Set as Independent Volume Profile for TPO Chart   (I...", "Yes"],
  ["Time Period Type for 'Fixed Time'   (In:34)", "Days"],
  ["Time Period Length for 'Fixed Time'   (In:35)", "1"],
  ["Number of Bars for 'Based On Bar Count'   (In:36)", "50"],
  ["Volume Per Profile for 'Specified Volume'   (In:2)", "1000000"],
  ["Number Of Days To Calculate Volume Profiles (0=Al...", "0"],
  ["Start Date   (In:37)", "2024-09-14"],
  ["Use Different Start Time   (In:38)", "No"],
  ["Start Time   (In:39)", "00:00:00"],
  ["End Date   (In:40)", "0"],
  ["End Time   (In:41)", "00:00:00"],
  ["Use Separate Profile For Evening Session   (In:42)", "No"],
  ["Exclude Evening Session Profiles Except For Last D...", "No"],
  ["Maximum Volume Bar Width Type   (In:43)", "Window Width"],
  ["Maximum Volume Bar Width Percentage   (In:44)", "20"],
  ["Right Align Volume Bars   (In:45)", "Yes"],
  ["Display Volume in Bars   (In:46)", "None"],
];

function ClassicSelect({ id, value, className }: { id: string; value: string; className: string }) {
  return (
    <div
      className={`relative h-6 border-2 border-b-white border-l-[#707070] border-r-white border-t-[#707070] bg-white ${className}`}
    >
      <select id={id} className="h-full w-full appearance-none bg-white pl-[2px] leading-5 outline-none">
        <option>{value}</option>
      </select>
      <span className="pointer-events-none absolute inset-y-0 right-0 flex w-4 items-center justify-center border-b-2 border-r-2 border-[#707070] bg-[#f0f0f0]">
        <svg viewBox="0 0 8 4" className="w-[8px]">
          <path d="M0 0h8l-4 4z" />
        </svg>
      </span>
    </div>
  );
}

function ClassicButton({ children, className = "" }: { children: ReactNode; className?: string }) {
  return (
    <button
      type="button"
      className={`h-[27px] border-2 border-b-[#707070] border-l-white border-r-[#707070] border-t-white bg-[#f0f0f0] ${className}`}
    >
      {children}
    </button>
  );
}

function Check({ checked, children }: { checked?: boolean; children: ReactNode }) {
  return (
    <label className="flex items-center gap-[6px] leading-4">
      <span className="relative flex h-3 w-3 shrink-0">
        <input
          type="checkbox"
          defaultChecked={checked}
          className="peer h-3 w-3 appearance-none border-2 border-b-white border-l-[#707070] border-r-white border-t-[#707070] bg-white"
        />
        <svg
          viewBox="0 0 12 12"
          className="pointer-events-none absolute inset-0 hidden h-3 w-3 peer-checked:block"
          fill="none"
          stroke="#000"
          strokeWidth={2}
        >
          <path d="M3 5.500l2.500 2.500l4.500-4.500" />
        </svg>
      </span>
      <span>{children}</span>
    </label>
  );
}

function SettingsDialog() {
  return (
    <div className="absolute left-[1692px] top-[597px] w-[766px] rounded-lg bg-[#f0f0f0] pb-4 font-['Liberation_Sans',sans-serif] text-[13px] text-black shadow-lg shadow-black">
      <header className="flex h-[30px] items-center justify-between rounded-t-lg bg-[#f4f4f4] px-2 font-['Open_Sans',sans-serif] text-[11px] text-[#909090]">
        <h2 className="whitespace-pre">{"Study Settings: VbP - 2024-09-14  00:00:00 to End. ID:5"}</h2>
        <button aria-label="Close">
          <X size={14} strokeWidth={1} />
        </button>
      </header>
      <div className="flex items-end pl-[14px] pt-[14px]" role="tablist">
        <button
          role="tab"
          className="h-[23px] w-[128px] border-l border-r-2 border-t border-l-white border-r-[#707070] border-t-white pb-1"
        >
          Settings and Inputs
        </button>
        <button role="tab" className="h-[21px] w-[76px] border-r-2 border-t border-r-[#707070] border-t-white">
          Subgraphs
        </button>
        <button role="tab" className="h-[21px] w-[48px] border-r-2 border-t border-r-[#707070] border-t-white">
          Alerts
        </button>
      </div>
      <div className="ml-[14px] mr-[13px] flex h-[492px] border-b-2 border-l border-r-2 border-t border-b-[#707070] border-l-white border-r-[#707070] border-t-white">
        <form className="flex w-[235px] flex-col items-start pl-[15px] pt-9">
          <span className="leading-5">Standard Precedence</span>
          <label htmlFor="based" className="mt-[6px] leading-5">
            Based On:
          </label>
          <ClassicSelect id="based" value="<Main Price Graph>" className="mt-[2px] w-[207px]" />
          <label htmlFor="short" className="mt-[6px] leading-5">
            Short Name:
          </label>
          <input
            id="short"
            className="mt-[2px] h-6 w-[207px] border-2 border-b-white border-l-[#707070] border-r-white border-t-[#707070] bg-white px-1"
          />
          <div className="mt-[6px] flex gap-[14px]">
            <div>
              <label htmlFor="region" className="block leading-5">
                Chart <u>R</u>egion:
              </label>
              <ClassicSelect id="region" value="1" className="mt-[2px] w-[96px]" />
            </div>
            <ClassicButton className="mt-[17px] w-[97px]">
              <u>S</u>cale
            </ClassicButton>
          </div>
          <div className="mt-[6px] flex gap-[10px]">
            <div>
              <label htmlFor="format" className="block leading-5">
                Value <u>F</u>ormat:
              </label>
              <ClassicSelect id="format" value="Inherited" className="mt-[2px] w-[168px]" />
            </div>
            <div>
              <label htmlFor="study-id" className="block pl-[3px] leading-5">
                ID:
              </label>
              <input
                id="study-id"
                defaultValue="5"
                className="mt-[2px] h-6 w-[39px] border-2 border-b-white border-l-[#707070] border-r-white border-t-[#707070] bg-white px-[2px]"
              />
            </div>
          </div>
          <div className="mt-3 flex flex-col gap-[7px]">
            <Check>
              Display As <u>M</u>ain Price Graph
            </Check>
            <Check>Hide Study</Check>
            <Check checked>
              Draw Study Underneath
              <br />
              Main Price Graph
            </Check>
            <Check>Protect with Password</Check>
          </div>
          <div className="mt-auto flex flex-col gap-2 pb-[17px]">
            <Check checked>Include in Study Summary</Check>
            <Check checked>Include in Spreadsheet</Check>
          </div>
        </form>
        <div className="w-[489px] pt-[15px]">
          <div className="flex h-[398px] flex-col border-l-2 border-t-2 border-[#808080]">
            <div className="flex">
              <table className="w-[469px] table-fixed border-collapse bg-white">
                <thead>
                  <tr className="h-[22px] border-b-2 border-[#808080] bg-[#f0f0f0] text-left">
                    <th className="w-[323px] border-r border-[#808080] pl-[5px] font-normal">Input Name</th>
                    <th className="pl-[5px] font-normal">Input Value</th>
                  </tr>
                </thead>
                <tbody>
                  {inputs.map(([name, value], i) => (
                    <tr key={name} className={`h-[17px] border-b border-[#e8e8e8] ${i === 3 ? "bg-[#f0f0f0]" : ""}`}>
                      <td className="whitespace-pre border-r border-[#e8e8e8] pl-1 leading-4">{name}</td>
                      <td className="whitespace-pre pl-[5px] leading-4">{value}</td>
                    </tr>
                  ))}
                </tbody>
              </table>
              <span className="ml-2 mt-[18px] h-20 w-[2px] bg-[#808080]" />
            </div>
            <span className="ml-4 mt-2 h-[2px] w-[422px] bg-[#808080]" />
          </div>
          <fieldset className="mt-2 h-[54px] border border-[#a0a0a0] pl-2">
            <legend className="px-[1px] leading-4">
              <label htmlFor="period-type">Volume Graph Period Type</label>
            </legend>
            <ClassicSelect id="period-type" value="From Start Date-Time to End" className="mt-1 w-[272px]" />
          </fieldset>
        </div>
      </div>
      <div className="ml-[14px] mt-[11px] flex gap-[10px]">
        <ClassicButton className="w-[92px]">
          <u>O</u>K
        </ClassicButton>
        <ClassicButton className="w-[92px]">
          <u>C</u>ancel
        </ClassicButton>
        <ClassicButton className="w-[92px]">Apply</ClassicButton>
        <ClassicButton className="w-[92px]">Help</ClassicButton>
        <ClassicButton className="w-[100px]">Description</ClassicButton>
        <ClassicButton className="w-[108px]">Set Defaults</ClassicButton>
        <ClassicButton className="w-[108px]">Reset Defaults</ClassicButton>
      </div>
      <svg
        viewBox="0 0 766 618"
        className="pointer-events-none absolute left-0 top-0 w-full"
        fill="none"
        stroke="#0050f0"
        strokeWidth={5}
        strokeLinecap="round"
        strokeLinejoin="round"
      >
        <path d="M491 161H548M537 153L551 161L538 169" />
        <path d="M655 272L597 272C575 273 565 282 567 290C575 297 600 293 625 298C645 302 665 300 678 297C680 290 665 280 655 272Z" />
      </svg>
    </div>
  );
}

function ControlCell({ children, className = "" }: { children?: ReactNode; className?: string }) {
  return (
    <button
      className={`flex h-[34px] w-[42px] items-center justify-center border-b border-r border-[#a0a0a0] text-center ${className}`}
    >
      {children}
    </button>
  );
}

function ControlBar() {
  const two = (a: string, b: string) => (
    <span>
      {a}
      <br />
      {b}
    </span>
  );
  const cells: ReactNode[] = [
    null,
    <svg viewBox="0 0 24 24" className="w-6" fill="none" stroke="#000">
      <path d="M2 19L20 1M8 23L24 7" />
      <rect x="0.500" y="17.500" width="3" height="3" fill="#f0f0f0" />
      <rect x="11.500" y="6.500" width="3" height="3" fill="#f0f0f0" />
      <rect x="12.500" y="16.500" width="3" height="3" fill="#f0f0f0" />
    </svg>,
    null,
    two("Msg", "Log"),
    null,
    two("Actv", "Log"),
    null,
    <span className="h-px w-6 bg-black" />,
    null,
    <span>abc</span>,
    null,
    two("Chart", "Link0"),
    null,
    two("Save", "All"),
    null,
    two("Open", "Cbook"),
    null,
    two("Chart", "Stdy"),
    null,
    <span className="h-4 w-5 border border-black" />,
    null,
    two("Erase", "Text"),
    two("Erase", "Lines"),
    null,
    <span className="text-[12px] text-[#808080]">CPSD</span>,
    null,
    <span className="text-[12px] text-[#808080]">CRBA</span>,
    null,
    <span className="text-[12px] text-[#808080]">CTBA</span>,
    null,
    null,
  ];
  return (
    <div className="absolute left-[2947px] top-[1732px] w-[348px] rounded bg-[#f0f0f0] pb-[14px] font-['Open_Sans',sans-serif] text-[11px] leading-[13px] text-black">
      <header className="flex h-[31px] items-center justify-between rounded-t pl-[9px] pr-[2px] text-[12px] text-[#909090]">
        <h2>Control Bar 1</h2>
        <button aria-label="Close" className="flex h-[19px] w-[19px] items-center justify-center bg-[#dcdcdc] text-white">
          x
        </button>
      </header>
      <p className="h-[31px] whitespace-pre border-t border-[#a0a0a0] bg-[#50ff50] pl-[5px] text-[14px] leading-[31px]">
        {"DF:416  ST:1, 1  BR:23.1K"}
      </p>
      <div className="mt-px flex border-t border-[#a0a0a0]">
        <ControlCell className="bg-[#00ff00] text-[12px] text-[#309030]">Con</ControlCell>
        <ControlCell className="bg-[#ff8080] text-[12px]">Dis</ControlCell>
        <label className="sr-only" htmlFor="account">
          Account
        </label>
        <ClassicSelect id="account" value="Sim1" className="mt-px h-[30px] w-[138px] text-[15px]" />
        <ControlCell className="ml-[4px] border-l" />
        <ControlCell>{two("Ordr", "Win")}</ControlCell>
      </div>
      <div className="grid w-[336px] grid-cols-8">
        {cells.map((cell, i) => (
          <ControlCell key={i} className={i === 11 ? "bg-white" : ""}>
            {cell}
          </ControlCell>
        ))}
      </div>
    </div>
  );
}

function MenuItem({ before = "", hot, after = "" }: { before?: string; hot: string; after?: string }) {
  return (
    <button>
      {before}
      <u>{hot}</u>
      {after}
    </button>
  );
}

export default function App() {
  return (
    <main className="relative w-full overflow-hidden bg-[#f0f0f0] font-['Open_Sans',sans-serif]">
      <header className="flex h-[23px] items-center justify-between bg-[#f3f3f3] pl-[3px] pr-3 text-[11px] text-[#8c8c8c]">
        <div className="flex items-center gap-[7px]">
          <svg viewBox="0 0 14 16" className="w-[14px]">
            <circle cx="7" cy="7" r="7" fill="#3b8fc4" />
            <path d="M1 5Q5 0 9 1Q6 6 8 13Q2 13 1 5Z" fill="#a8d030" />
            <path d="M4 13h6l-1 3h-4z" fill="#707070" />
          </svg>
          <h1 className="whitespace-pre">
            {"Sierra Chart 2782 01_MES Rithmic Direct - DTC 2025-10-19  13:54:37 Sun [Sim] DF:416  ST:1, 1"}
          </h1>
        </div>
        <div className="flex gap-9">
          <button aria-label="Minimize">
            <Minus size={13} strokeWidth={1} />
          </button>
          <button aria-label="Restore">
            <Square size={11} strokeWidth={1} />
          </button>
          <button aria-label="Close">
            <X size={14} strokeWidth={1} />
          </button>
        </div>
      </header>
      <nav className="flex h-[18px] items-center gap-[14px] bg-white pl-[7px] text-[11px] text-[#606060]">
        <MenuItem hot="F" after="ile" />
        <MenuItem hot="E" after="dit" />
        <MenuItem hot="C" after="hart" />
        <MenuItem hot="A" after="nalysis" />
        <MenuItem hot="T" after="ools" />
        <MenuItem before="S" hot="p" after="readsheet" />
        <MenuItem before="Tra" hot="d" after="e" />
        <MenuItem hot="G" after="lobal Settings" />
        <MenuItem hot="W" after="indow" />
        <MenuItem before="C" hot="B" />
        <MenuItem before="CW" hot="" />
        <MenuItem before="He" hot="l" after="p" />
      </nav>
      <div className="h-[30px] pl-px pt-[3px]">
        <button className="h-[26px] w-[57px] bg-[#0078d7] text-[14px] leading-[26px] text-white">01_MES</button>
      </div>
      <div className="grid grid-cols-[minmax(0,1549fr)_minmax(0,2546fr)] border-t-2 border-[#787878]">
        <div className="pb-1 pt-2">
          <RangeChart />
          <div className="mb-1 mt-2 h-[2px] bg-[#787878]" />
          <FastChart />
        </div>
        <div className="pt-[6px]">
          <LadderStrip />
          <MarketWindow />
        </div>
      </div>
      <div className="absolute left-[1677px] top-[673px] flex h-[466px] w-[796px] items-start justify-end rounded-lg bg-[#ececec] p-2 text-[#909090]">
        <X size={14} strokeWidth={1} />
      </div>
      <SettingsDialog />
      <ControlBar />
    </main>
  );
}
